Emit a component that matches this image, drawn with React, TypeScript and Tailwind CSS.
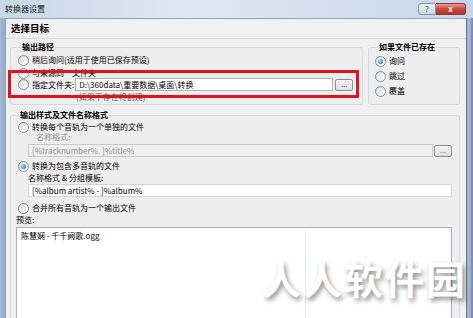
import React from "react";

const font = "font-['Noto_Sans_CJK_SC','Noto_Sans',sans-serif]";

const Radio = ({ checked }: { checked?: boolean }) => (
  <span className="w-[11px] h-[11px] shrink-0 rounded-full border border-[#8a8f96] bg-[linear-gradient(135deg,#d9dcdf,#ffffff)] flex items-center justify-center">
    {checked && (
      <span className="w-[5px] h-[5px] rounded-full bg-[radial-gradient(circle_at_35%_35%,#a8dcff,#1d5fae)]" />
    )}
  </span>
);

const RadioRow = ({
  label,
  checked,
  className = "",
}: {
  label: string;
  checked?: boolean;
  className?: string;
}) => (
  <div className={`flex items-center gap-[3px] h-[12px] leading-[12px] ${className}`}>
    <Radio checked={checked} />
    <span>{label}</span>
  </div>
);

const Dots = ({ disabled }: { disabled?: boolean }) => (
  <button
    className={`w-[18px] h-[12px] shrink-0 rounded-[2px] border border-[#8d8d8d] bg-[linear-gradient(#f6f6f6,#dcdcdc)] flex items-center justify-center text-[7px] leading-none ${
      disabled ? "text-[#777]" : "text-[#333]"
    }`}
  >
    ...
  </button>
);

export default function App() {
  return (
    <div
      className={`w-[473px] h-[318px] overflow-hidden relative flex flex-col bg-[linear-gradient(90deg,#c9d7e8,#dfe8f2_40%,#c7d6e8)] text-[8px] text-black ${font}`}
    >
      {/* Title bar */}
      <div className="h-[18px] flex items-start shrink-0">
        <div className="pl-[5px] pt-[4px] text-[8px] leading-[10px] text-[#1a1a1a]">转换器设置</div>
        <div className="ml-auto mt-[3px] mr-[7px] flex">
          <div className="w-[18px] h-[12px] rounded-l-[3px] border border-[#8592a3] bg-[linear-gradient(#eef3f9,#c9d5e3)] text-[#555] text-[8px] leading-[10px] text-center">
            ?
          </div>
          <div className="w-[30px] h-[12px] rounded-r-[3px] border border-l-0 border-[#7d3a37] bg-[linear-gradient(#e8a093,#c9463a_50%,#b8322a)] text-white text-[8px] leading-[10px] text-center font-bold">
            x
          </div>
        </div>
      </div>

      {/* Body */}
      <div className="flex-1 flex min-h-0">
        <div className="w-[2px] bg-[#aab6c4]" />
        <div className="w-[3px] bg-[#8fb0d8]" />
        <div className="flex-1 flex flex-col bg-[#f0f0f0] border-l border-t border-[#9aa4b0] min-w-0">
          {/* Header */}
          <div className="h-[20px] shrink-0 flex items-center pl-[5px] text-[9.5px] font-bold border-b border-[#d8dadd]">
            选择目标
          </div>

          <div className="flex gap-[5px] pl-[4px] pr-[6px] mt-[1px]">
            {/* Output path */}
            <fieldset className="w-[353px] h-[65px] border border-[#d5d9dd] rounded-[3px] pl-[7px] bg-[#eeeeee]">
              <legend className="ml-[3px] px-[1px] text-[8px] font-bold leading-[14px]">输出路径</legend>
              <RadioRow label="稍后询问(适用于使用已保存预设)" />
              <RadioRow label="与来源同一文件夹" className="mt-[1px]" />
              <div className="flex items-center h-[13px] mt-[-1px]">
                <RadioRow label="指定文件夹:" />
                <div className="ml-[1px] w-[258px] h-[13px] border border-[#abadb3] bg-white flex items-center pl-[3px] leading-[11px]">
                  D:\360data\重要数据\桌面\转换
                </div>
                <div className="ml-[2px]">
                  <Dots />
                </div>
              </div>
              <div className="pl-[58px] h-[12px] leading-[12px] text-[#555]">(如果不存在将创建)</div>
            </fieldset>

            {/* If exists */}
            <fieldset className="w-[92px] h-[65px] border border-[#d5d9dd] rounded-[3px] pl-[6px] bg-[#eeeeee]">
              <legend className="ml-[3px] px-[1px] text-[8px] font-bold leading-[14px]">如果文件已存在</legend>
              <RadioRow label="询问" checked className="mt-[1px]" />
              <RadioRow label="跳过" className="mt-[3px]" />
              <RadioRow label="覆盖" className="mt-[3px]" />
            </fieldset>
          </div>

          {/* Output style */}
          <fieldset className="ml-[4px] mr-[6px] mt-[3px] flex-1 border border-[#d5d9dd] rounded-[3px] bg-[#eeeeee] pl-[5px] pr-[7px]">
            <legend className="ml-[3px] px-[1px] text-[8px] font-bold leading-[14px]">输出样式及文件名称格式</legend>
            <RadioRow label="转换每个音轨为一个单独的文件" className="mt-[-1px] ml-[2px]" />
            <div className="pl-[20px] text-[#8e8e8e] h-[12px] leading-[12px] mt-[-2px]">名称格式:</div>
            <div className="flex items-center pl-[12px] mt-[1px]">
              <div className="flex-1 h-[13px] border border-[#c9c9c9] bg-[#f0f0f0] text-[#8e8e8e] pl-[3px] leading-[11px]">
                [%tracknumber%. ]%title%
              </div>
              <div className="ml-[1px]">
                <Dots disabled />
              </div>
            </div>
            <RadioRow label="转换为包含多音轨的文件" checked className="mt-[3px] ml-[2px]" />
            <div className="pl-[12px] h-[12px] leading-[12px]">名称格式 &amp; 分组模板:</div>
            <div className="ml-[12px] h-[13px] border border-[#d4d4d4] bg-white pl-[3px] leading-[11px]">
              [%album artist% - ]%album%
            </div>
            <RadioRow label="合并所有音轨为一个输出文件" className="mt-[5px] ml-[2px]" />
            <div className="h-[12px] leading-[12px] mt-[0px]">预览:</div>
            <div className="mt-[1px] h-[120px] border border-[#abadb3] bg-white pl-[4px] pt-[2px] leading-[12px] flex">
              <span>陈慧娴 - 千千阙歌.ogg</span>
              <div className="ml-[206px] w-px bg-[#e3ecf7]" />
            </div>
          </fieldset>
        </div>
        <div className="w-[1px] bg-[#6b7480]" />
        <div className="w-[4px] bg-[#9bb6d8]" />
        <div className="w-[2px] bg-[#7e8da0]" />
      </div>

      {/* Red highlight annotation */}
      <div className="absolute left-[8px] top-[70px] w-[351px] h-[28px] border-[3px] border-[#e0141e]" />

      {/* Watermark */}
      <div className="absolute left-[262px] top-[254px] text-[39px] font-bold leading-[46px] tracking-[2px] text-white [text-shadow:2px_3px_5px_rgba(0,0,0,0.45)]">
        人人软件园
      </div>
    </div>
  );
}
